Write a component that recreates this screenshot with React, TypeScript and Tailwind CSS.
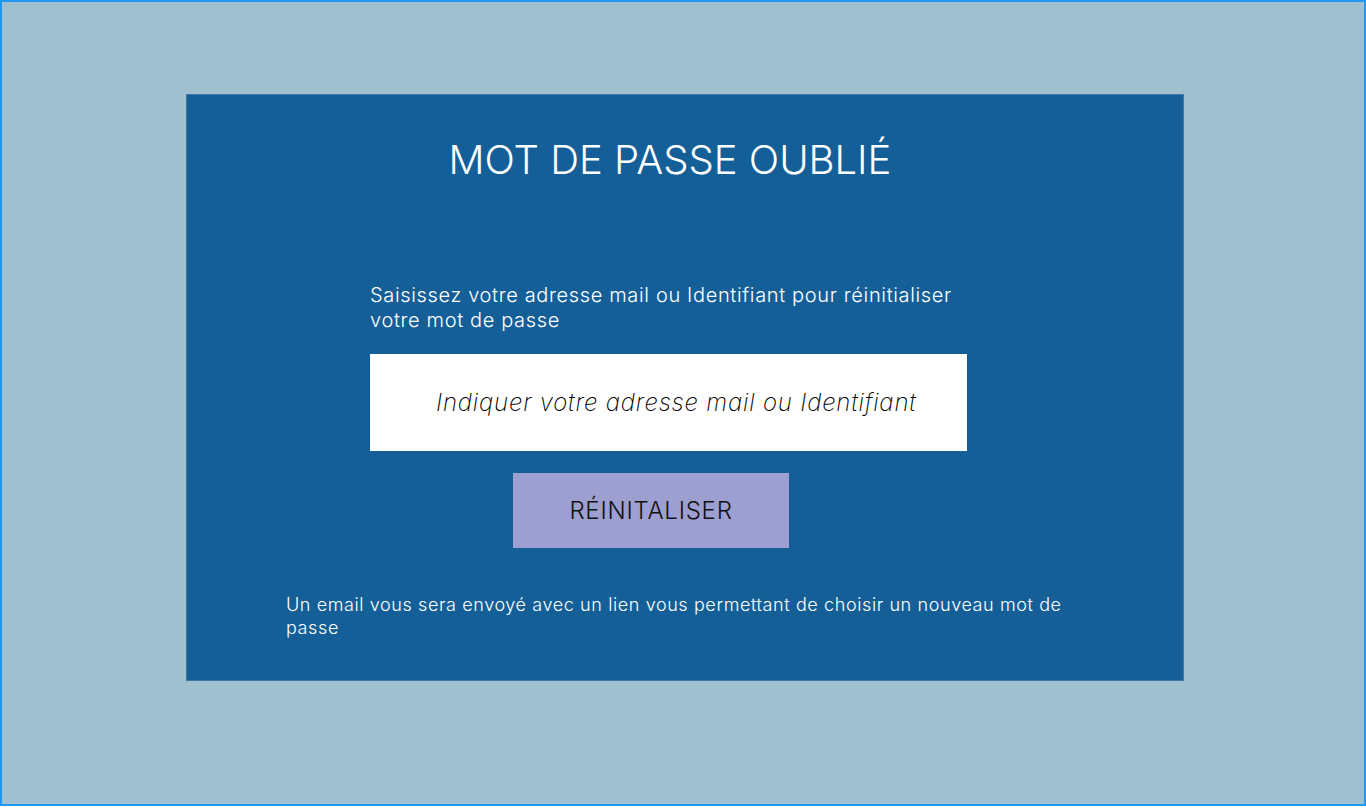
export default function App() {
  return (
    <div className="h-[809px] w-full bg-white font-['Inter',sans-serif]">
      <div className="h-[806px] border-2 border-[#2196f3] bg-[#a0bfcf] pl-[184px] pt-[92px]">
        <div className="flex h-[587px] w-[998px] flex-col border border-[#3f7aa6] bg-[#145f98]">
          <h1 className="mt-[45px] pr-[30px] text-center text-[40px] font-light leading-none text-white">
            MOT DE PASSE OUBLIÉ
          </h1>

          <div className="ml-[183px] mt-[103px] flex w-[597px] flex-col">
            <p className="w-[597px] text-[20px] font-light leading-[25px] tracking-[0.65px] text-white">
              Saisissez votre adresse mail ou Identifiant pour réinitialiser votre mot de passe
            </p>
            <input
              type="text"
              placeholder="Indiquer votre adresse mail ou Identifiant"
              className="mt-[21px] h-[97px] w-[597px] bg-white pl-[66px] text-[24px] font-extralight italic tracking-[0.8px] text-black outline-none placeholder:text-black"
            />
            <button className="ml-[143px] mt-[22px] h-[75px] w-[276px] bg-[#9d9fd0] text-[24px] font-light tracking-[0.75px] text-[#111]">
              RÉINITALISER
            </button>
          </div>

          <p className="ml-[99px] mt-[45px] w-[800px] text-[18px] font-light leading-[23px] tracking-[0.6px] text-white">
            Un email vous sera envoyé avec un lien vous permettant de choisir un nouveau mot de passe
          </p>
        </div>
      </div>
    </div>
  )
}
